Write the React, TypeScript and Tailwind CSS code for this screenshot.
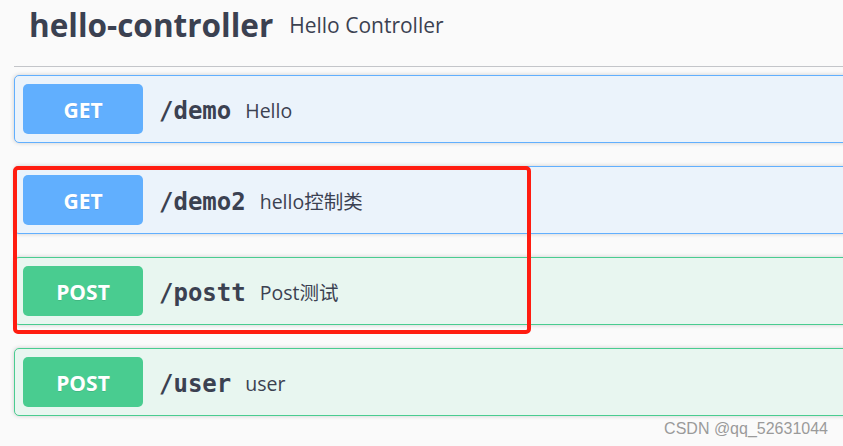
import React from "react";

type Op = {
  method: "GET" | "POST";
  path: string;
  summary: string;
};

const ops: Op[] = [
  { method: "GET", path: "/demo", summary: "Hello" },
  { method: "GET", path: "/demo2", summary: "hello控制类" },
  { method: "POST", path: "/postt", summary: "Post测试" },
  { method: "POST", path: "/user", summary: "user" },
];

function OpBlock({ op }: { op: Op }) {
  const get = op.method === "GET";
  return (
    <div
      className={
        "mb-[23px] flex items-center rounded-[5px] border p-[8px] shadow-[0_0_4px_rgba(0,0,0,0.19)] " +
        (get ? "border-[#61affe] bg-[#ebf3fb]" : "border-[#49cc90] bg-[#e8f6f0]")
      }
    >
      <span
        className={
          "flex h-[50px] w-[120px] items-center justify-center rounded-[5px] pt-[4px] font-['Open_Sans',sans-serif] text-[21px] font-bold text-white [text-shadow:0_1px_0_rgba(0,0,0,0.1)] " +
          (get ? "bg-[#61affe]" : "bg-[#49cc90]")
        }
      >
        {op.method}
      </span>
      <span className="ml-[16px] pt-[4px] font-['DejaVu_Sans_Mono',monospace] text-[24px] font-bold text-[#3b4151]">
        {op.path}
      </span>
      <span className="ml-[14px] pt-[3px] font-['Open_Sans','Noto_Sans_CJK_SC',sans-serif] text-[19.5px] text-[#3b4151]">
        {op.summary}
      </span>
    </div>
  );
}

export default function App() {
  return (
    <div className="relative h-[446px] w-[843px] overflow-hidden bg-[#fafafa]">
      <div className="w-[880px] pl-[14px]">
        <div className="mb-[8px] flex h-[67px] items-center border-b border-[#c3c5c9] pb-[16px] pl-[15px] font-['Open_Sans',sans-serif] text-[#3b4151]">
          <h4 className="text-[31.5px] leading-none font-bold">hello-controller</h4>
          <span className="ml-[16px] text-[21px] leading-none">Hello Controller</span>
        </div>
        {ops.map((op) => (
          <OpBlock key={op.path} op={op} />
        ))}
      </div>
      <div className="absolute left-[13px] top-[166px] h-[168px] w-[518px] rounded-[5px] border-[4px] border-[#ff1c10]" />
      <div className="absolute right-[15px] top-[417px] font-['Liberation_Sans',Arial,sans-serif] text-[16px] text-[#9a9a9a]">
        CSDN @qq_52631044
      </div>
    </div>
  );
}
